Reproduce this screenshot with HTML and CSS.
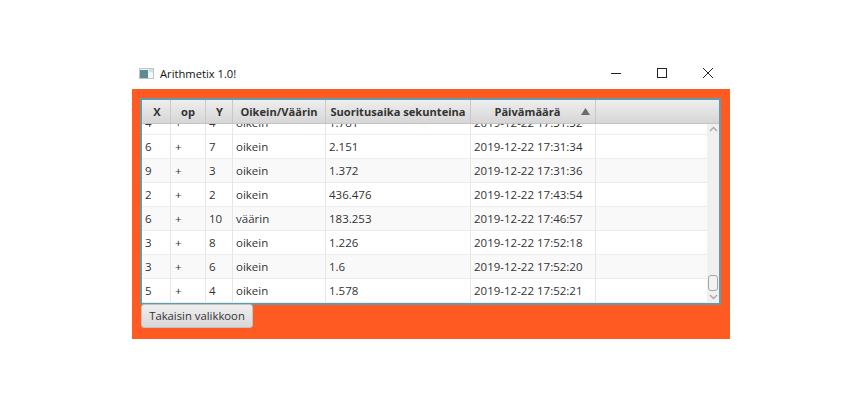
FILE: index.html
```html
<!DOCTYPE html>
<html>
<head>
    <meta charset="UTF-8">
    <title>Arithmetix 1.0!</title>
    <link rel="stylesheet" href="styles.css">
</head>
<body>
    <div class="window">
        <div class="titlebar">
            <svg class="app-icon" width="15" height="11" viewBox="0 0 15 11">
                <rect x="0.5" y="0.5" width="14" height="10" fill="#eef2f3" stroke="#bcc6c9"/>
                <rect x="1" y="2" width="8" height="8" fill="#5d8b95"/>
                <rect x="10" y="1" width="4" height="3" fill="#d5e0e3"/>
                <rect x="10" y="5" width="4" height="5" fill="#f6f8f8"/>
            </svg>
            <span class="title">Arithmetix 1.0!</span>
            <div class="controls">
                <svg width="12" height="12" viewBox="0 0 12 12"><path d="M1 6.5H11" stroke="#222" fill="none"/></svg>
                <svg width="12" height="12" viewBox="0 0 12 12"><rect x="1.5" y="1.5" width="9" height="9" stroke="#222" fill="none"/></svg>
                <svg width="12" height="12" viewBox="0 0 12 12"><path d="M1 1L11 11M11 1L1 11" stroke="#222" fill="none"/></svg>
            </div>
        </div>
        <div class="content">
            <div class="table">
                <div class="row head">
                    <div class="c1">X</div>
                    <div class="c2">op</div>
                    <div class="c3">Y</div>
                    <div class="c4">Oikein/Väärin</div>
                    <div class="c5">Suoritusaika sekunteina</div>
                    <div class="c6 sorted">Päivämäärä<svg class="sort" width="9" height="7" viewBox="0 0 9 7"><path d="M4.5 0L9 7H0Z" fill="#6b6b6b"/></svg></div>
                    <div class="c7"></div>
                </div>
                <div class="body">
                    <div class="rows">
                        <div class="row"><div class="c1">4</div><div class="c2">+</div><div class="c3">4</div><div class="c4">oikein</div><div class="c5">1.781</div><div class="c6">2019-12-22 17:31:32</div><div class="c7"></div></div>
                        <div class="row"><div class="c1">6</div><div class="c2">+</div><div class="c3">7</div><div class="c4">oikein</div><div class="c5">2.151</div><div class="c6">2019-12-22 17:31:34</div><div class="c7"></div></div>
                        <div class="row odd"><div class="c1">9</div><div class="c2">+</div><div class="c3">3</div><div class="c4">oikein</div><div class="c5">1.372</div><div class="c6">2019-12-22 17:31:36</div><div class="c7"></div></div>
                        <div class="row"><div class="c1">2</div><div class="c2">+</div><div class="c3">2</div><div class="c4">oikein</div><div class="c5">436.476</div><div class="c6">2019-12-22 17:43:54</div><div class="c7"></div></div>
                        <div class="row odd"><div class="c1">6</div><div class="c2">+</div><div class="c3">10</div><div class="c4">väärin</div><div class="c5">183.253</div><div class="c6">2019-12-22 17:46:57</div><div class="c7"></div></div>
                        <div class="row"><div class="c1">3</div><div class="c2">+</div><div class="c3">8</div><div class="c4">oikein</div><div class="c5">1.226</div><div class="c6">2019-12-22 17:52:18</div><div class="c7"></div></div>
                        <div class="row odd"><div class="c1">3</div><div class="c2">+</div><div class="c3">6</div><div class="c4">oikein</div><div class="c5">1.6</div><div class="c6">2019-12-22 17:52:20</div><div class="c7"></div></div>
                        <div class="row"><div class="c1">5</div><div class="c2">+</div><div class="c3">4</div><div class="c4">oikein</div><div class="c5">1.578</div><div class="c6">2019-12-22 17:52:21</div><div class="c7"></div></div>
                    </div>
                    <div class="scrollbar">
                        <svg width="9" height="6" viewBox="0 0 9 6"><path d="M1 5L4.5 1.5L8 5" stroke="#a8a8a8" stroke-width="1.3" fill="none"/></svg>
                        <div class="thumb"></div>
                        <svg width="9" height="6" viewBox="0 0 9 6"><path d="M1 1L4.5 4.5L8 1" stroke="#a8a8a8" stroke-width="1.3" fill="none"/></svg>
                    </div>
                </div>
            </div>
            <button class="back">Takaisin valikkoon</button>
        </div>
    </div>
</body>
</html>
```

FILE: styles.css
```css
body {
    margin: 0;
    background-color: #fff;
    font-family: "Open Sans", Arial, sans-serif;
    font-size: 11.5px;
    color: #333;
}
.window {
    width: 598px;
    margin: 58px 0 0 132px;
}
.titlebar {
    display: flex;
    align-items: center;
    height: 31px;
}
.app-icon {
    margin: -1px 0 0 7px;
}
.title {
    margin-left: 6px;
    font-size: 11.2px;
    color: #111;
}
.controls {
    display: flex;
    gap: 34px;
    margin: -2px 16px 0 auto;
}
.content {
    height: 250px;
    box-sizing: border-box;
    padding: 9px 9px 0 8px;
    background-color: #ff5a22;
}
.table {
    height: 207px;
    box-sizing: border-box;
    border: 2px solid #5f9cad;
    background-color: #fff;
}
.row {
    display: flex;
    height: 24px;
    box-sizing: border-box;
    border-bottom: 1px solid #ececec;
}
.row > div {
    box-sizing: border-box;
    display: flex;
    align-items: center;
    padding-left: 3px;
    border-right: 1px solid #e6e6e6;
    white-space: nowrap;
}
.c1 { width: 29px; }
.c2 { width: 35px; }
.c3 { width: 27px; }
.c4 { width: 93px; }
.c5 { width: 145px; }
.c6 { width: 125px; }
.row .c7 { flex: 1; border-right: 0; }
.row .c2 { padding-left: 4px; }
.odd { background-color: #f9f9f9; }
.head {
    height: 24px;
    border-bottom: 1px solid #c4c4c4;
    background: linear-gradient(#eeeeee, #d6d6d6);
    font-size: 11.1px;
    font-weight: 700;
    color: #333;
}
.head > div {
    justify-content: center;
    padding-left: 0;
    border-right: 1px solid #c8c8c8;
}
.row.head .c1 { padding-left: 2px; }
.row.head .c2 { padding-left: 0; }
.row.head .c3 { padding-left: 1px; }
.row.head .sorted {
    position: relative;
    padding: 0 11px 0 0;
}
.sort {
    position: absolute;
    right: 5px;
    top: 8px;
}
.body {
    display: flex;
    height: 179px;
    overflow: hidden;
}
.rows {
    flex: 1;
    margin-top: -13px;
}
.scrollbar {
    display: flex;
    flex-direction: column;
    align-items: center;
    width: 12px;
    background-color: #f0f0f0;
    padding: 2px 0 3px;
    box-sizing: border-box;
}
.scrollbar svg {
    flex: none;
}
.thumb {
    width: 10px;
    height: 16px;
    margin-top: auto;
    margin-bottom: 3px;
    box-sizing: border-box;
    border: 1px solid #a5a5a5;
    border-radius: 3px;
    background-color: #f2f2f2;
}
.back {
    display: block;
    width: 112px;
    height: 24px;
    margin: -1px 0 0 1px;
    padding: 0 0 1px;
    border: 1px solid #c2c2c2;
    border-radius: 3px;
    background: linear-gradient(#efefef, #d8d8d8);
    font-family: inherit;
    font-size: 11.3px;
    color: #333;
}
```
